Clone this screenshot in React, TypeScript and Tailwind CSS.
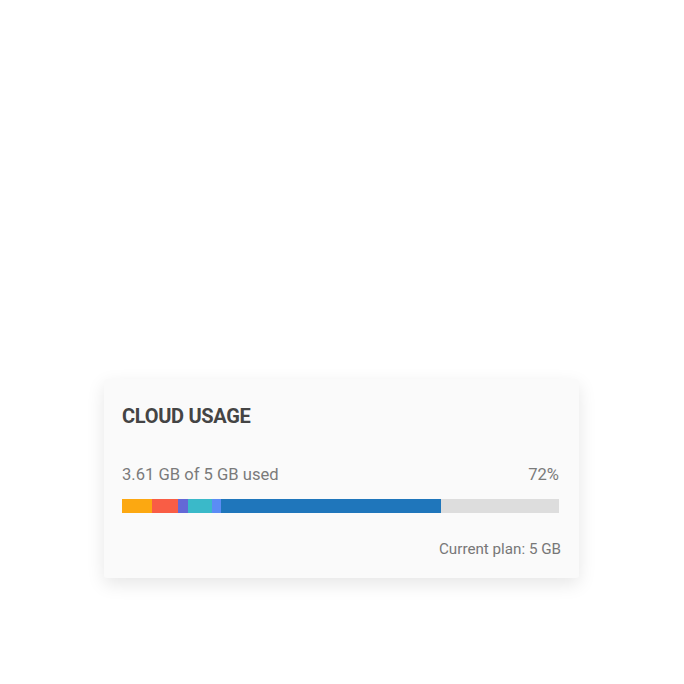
const segments = [
  { color: 'bg-[#fca811]', width: 30 },
  { color: 'bg-[#f95d45]', width: 26 },
  { color: 'bg-[#6468d6]', width: 10 },
  { color: 'bg-[#3ab9c9]', width: 24 },
  { color: 'bg-[#5b8cf5]', width: 9 },
  { color: 'bg-[#1f76bb]', width: 220 },
];

export default function App() {
  return (
    <div className="w-[684px] h-[684px] bg-white pt-[379px] pl-[104px] font-['Roboto',sans-serif]">
      <div className="w-[475px] h-[199px] bg-[#fafafa] rounded-[3px] shadow-[0_6px_18px_rgba(0,0,0,0.10)] px-[18px] pt-[23px]">
        <h2 className="text-[20px] leading-[28px] font-bold text-[#444] tracking-[-0.3px]">CLOUD USAGE</h2>
        <div className="flex justify-between items-baseline mt-[35px] pr-[2px] text-[16.6px] leading-[20px] text-[#7a7a7a]">
          <span>3.61 GB of 5 GB used</span>
          <span>72%</span>
        </div>
        <div className="flex w-[437px] h-[14px] bg-[#dddddd] mt-[14px]">
          {segments.map((s, i) => (
            <div key={i} className={`h-full ${s.color}`} style={{ width: s.width }} />
          ))}
        </div>
        <div className="text-right text-[15.2px] leading-[18px] text-[#777] mt-[27px]">Current plan: 5 GB</div>
      </div>
    </div>
  );
}
